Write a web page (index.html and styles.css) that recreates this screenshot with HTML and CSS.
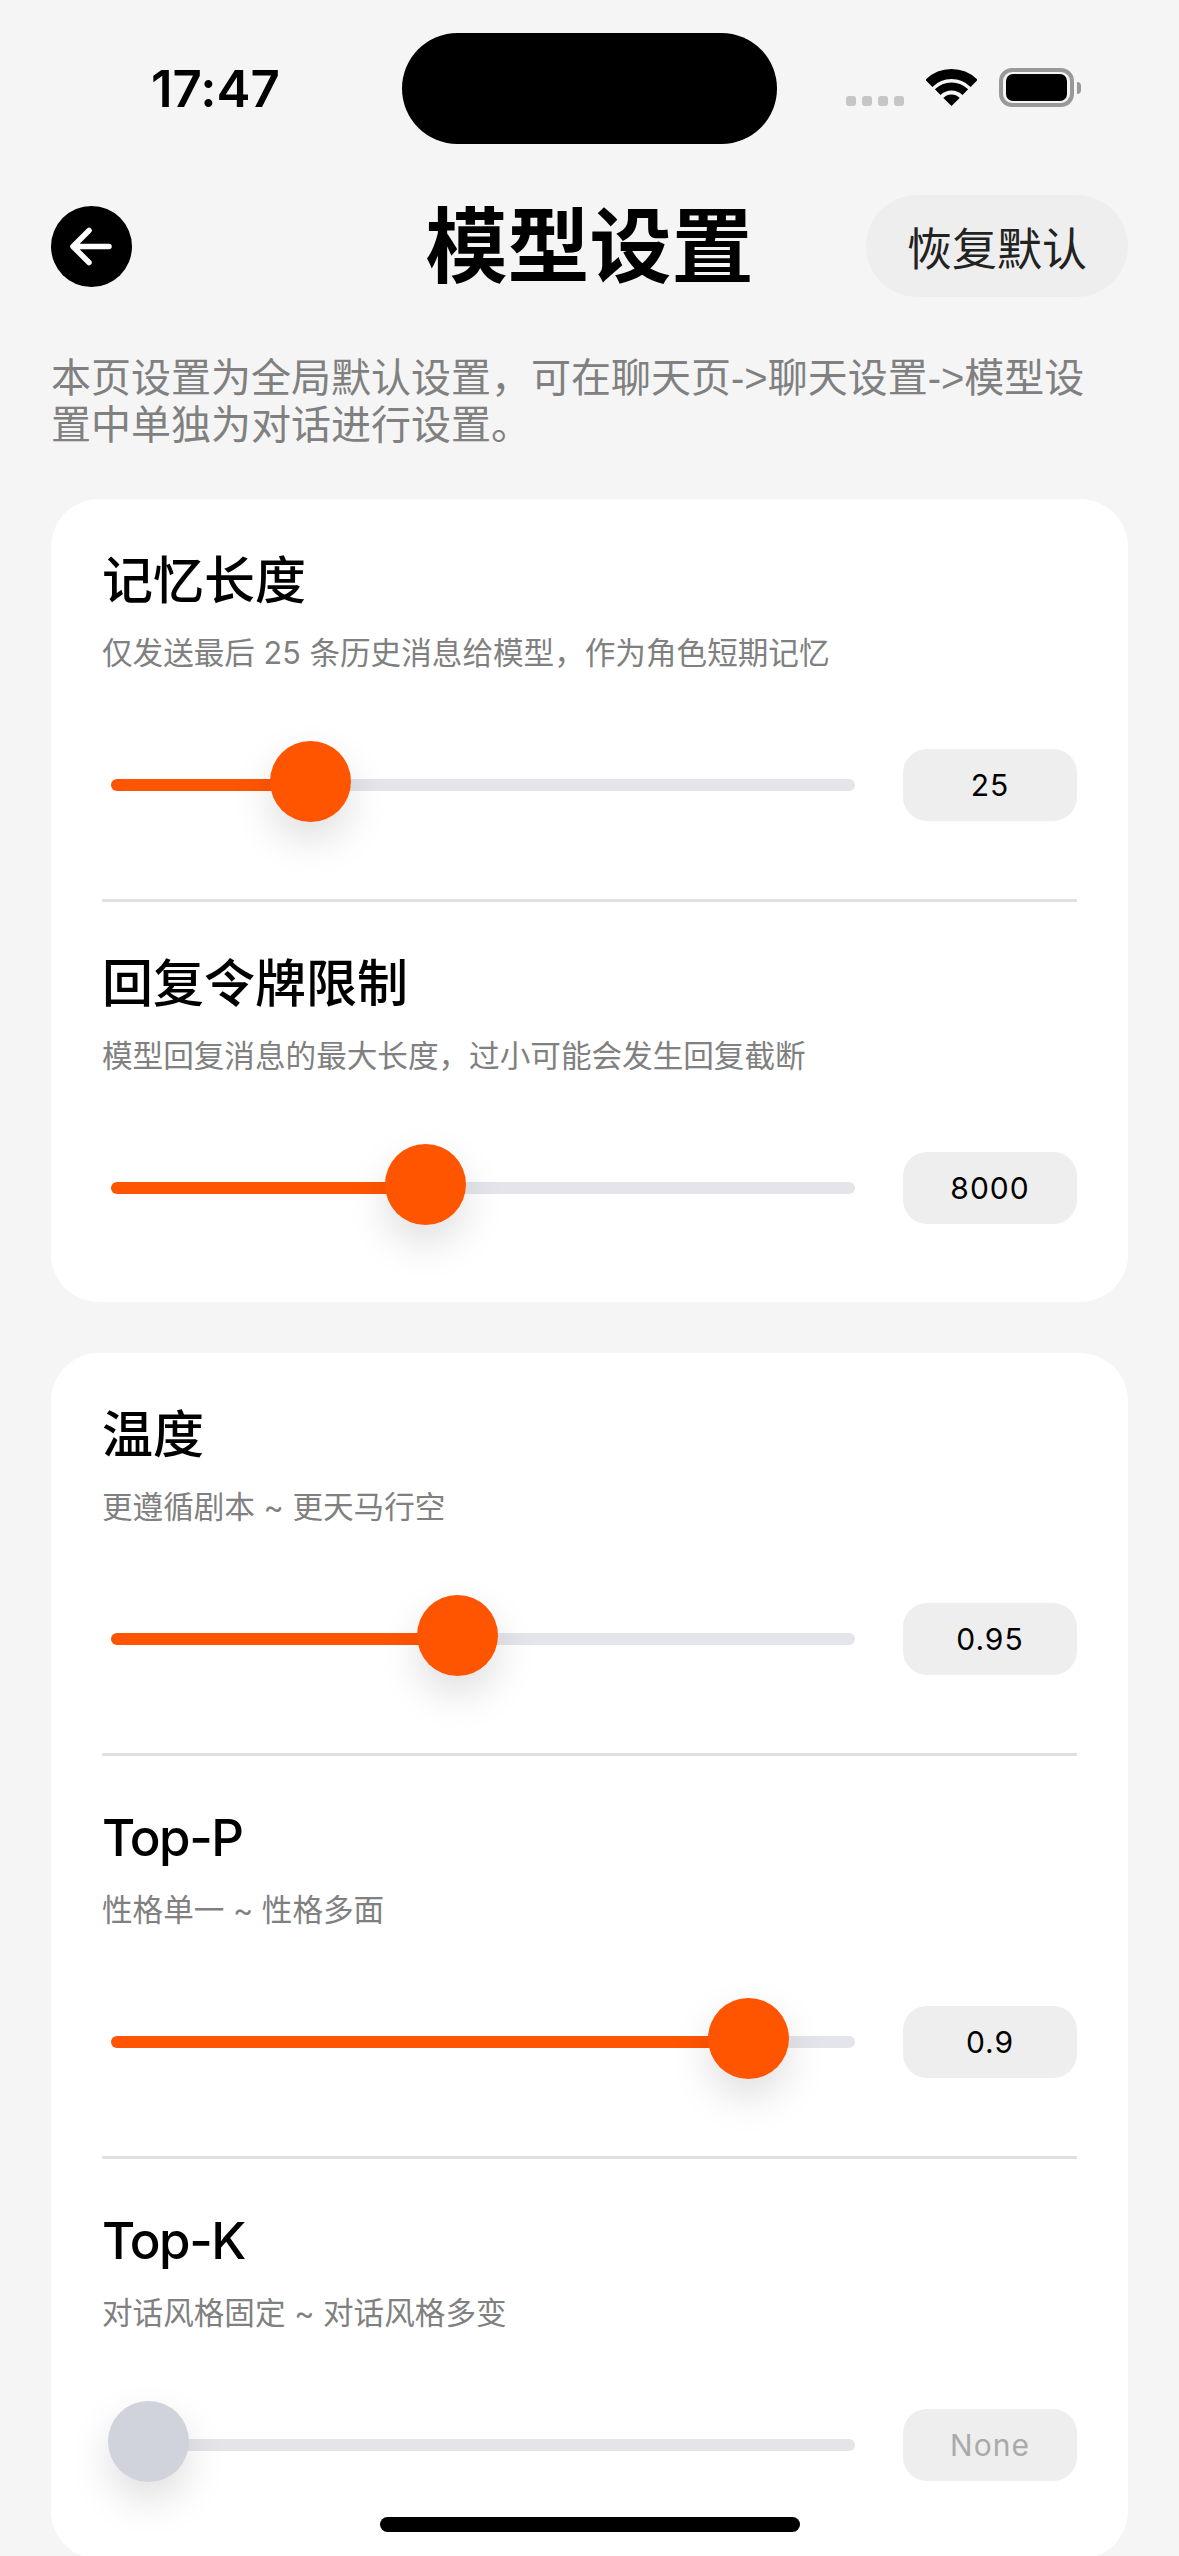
FILE: index.html
```html
<!DOCTYPE html>
<html lang="zh-CN">
  <head>
    <meta charset="UTF-8" />
    <meta name="viewport" content="width=device-width, initial-scale=1.0" />
    <title>模型设置</title>
    <link rel="stylesheet" href="styles.css">
  </head>
  <body>
    <!-- Status bar -->
    <div class="status-bar">
      <div class="status-time">17:47</div>
      <div class="island"></div>
      <div class="status-icons">
        <div class="signal"><span></span><span></span><span></span><span></span></div>
        <svg class="wifi" width="51" height="37" viewBox="0 0 51 37">
          <path d="M2.9 14.4A32 32 0 0 1 48.1 14.4" fill="none" stroke="#000" stroke-width="10" />
          <path d="M11.7 23.2A19.5 19.5 0 0 1 39.3 23.2" fill="none" stroke="#000" stroke-width="8" />
          <path d="M25.5 37L17.4 28.9A11.5 11.5 0 0 1 33.6 28.9Z" fill="#000" />
        </svg>
        <div class="battery"><div class="battery-level"></div></div>
        <div class="battery-nub"></div>
      </div>
    </div>

    <!-- Header -->
    <header class="page-header">
      <div class="header-left">
        <button class="back-btn">
          <svg width="81" height="81" viewBox="0 0 81 81">
            <path d="M22 40.5H58M38 24.5L22 40.5L38 56.5" fill="none" stroke="#fff" stroke-width="5.5" stroke-linecap="round" stroke-linejoin="round" />
          </svg>
        </button>
      </div>
      <h1>模型设置</h1>
      <div class="header-right">
        <button class="reset-btn">恢复默认</button>
      </div>
    </header>

    <p class="page-desc">本页设置为全局默认设置，可在聊天页-&gt;聊天设置-&gt;模型设置中单独为对话进行设置。</p>

    <!-- Card 1 -->
    <section class="card">
      <div class="setting">
        <h2>记忆长度</h2>
        <p class="hint">仅发送最后 25 条历史消息给模型，作为角色短期记忆</p>
        <div class="slider-row">
          <div class="track">
            <div class="fill" style="width: 26.7%"></div>
            <div class="thumb" style="left: 26.7%"></div>
          </div>
          <div class="value">25</div>
        </div>
      </div>
      <div class="setting">
        <h2>回复令牌限制</h2>
        <p class="hint">模型回复消息的最大长度，过小可能会发生回复截断</p>
        <div class="slider-row">
          <div class="track">
            <div class="fill" style="width: 42.2%"></div>
            <div class="thumb" style="left: 42.2%"></div>
          </div>
          <div class="value">8000</div>
        </div>
      </div>
    </section>

    <!-- Card 2 -->
    <section class="card">
      <div class="setting">
        <h2>温度</h2>
        <p class="hint">更遵循剧本 ~ 更天马行空</p>
        <div class="slider-row">
          <div class="track">
            <div class="fill" style="width: 46.5%"></div>
            <div class="thumb" style="left: 46.5%"></div>
          </div>
          <div class="value">0.95</div>
        </div>
      </div>
      <div class="setting">
        <h2 class="title-en">Top-P</h2>
        <p class="hint">性格单一 ~ 性格多面</p>
        <div class="slider-row">
          <div class="track">
            <div class="fill" style="width: 85.6%"></div>
            <div class="thumb" style="left: 85.6%"></div>
          </div>
          <div class="value">0.9</div>
        </div>
      </div>
      <div class="setting">
        <h2 class="title-en">Top-K</h2>
        <p class="hint">对话风格固定 ~ 对话风格多变</p>
        <div class="slider-row">
          <div class="track">
            <div class="thumb thumb-off" style="left: 5%"></div>
          </div>
          <div class="value value-off">None</div>
        </div>
      </div>
    </section>

    <div class="home-bar"></div>
  </body>
</html>
```

FILE: styles.css
```css
* {
  box-sizing: border-box;
}

html,
body {
  height: 2556px;
}

body {
  margin: 0;
  overflow: hidden;
  position: relative;
  background: #f5f5f5;
  color: #000;
  font-family: Inter, "Noto Sans CJK SC", sans-serif;
  font-variant-ligatures: none;
  font-feature-settings: "calt" 0;
}

/* Status bar */
.status-bar {
  display: flex;
  height: 195px;
  padding-top: 33px;
}

.status-time {
  width: 402px;
  padding-left: 151px;
  padding-top: 27px;
  font-size: 51px;
  line-height: 58px;
  font-weight: 600;
}

.island {
  width: 375px;
  height: 111px;
  background: #000;
  border-radius: 56px;
}

.status-icons {
  display: flex;
  align-items: flex-start;
  padding-left: 69px;
}

.signal {
  display: flex;
  gap: 6px;
  margin-top: 63px;
}

.signal span {
  width: 10px;
  height: 10px;
  border-radius: 3px;
  background: #c6c6c6;
}

.wifi {
  margin: 36px 0 0 22px;
}

.battery {
  width: 75px;
  height: 39px;
  margin: 35px 0 0 22px;
  padding: 2px 3px;
  border: 4px solid #999;
  border-radius: 13px;
}

.battery-level {
  height: 100%;
  background: #000;
  border-radius: 7px;
}

.battery-nub {
  width: 4px;
  height: 12px;
  margin: 49px 0 0 3px;
  background: #999;
  border-radius: 0 6px 6px 0;
}

/* Header */
.page-header {
  display: grid;
  grid-template-columns: 1fr auto 1fr;
  align-items: center;
  height: 102px;
  padding: 0 51px;
}

.page-header h1 {
  margin: 0;
  padding-top: 2px;
  font-size: 82px;
  line-height: 100px;
  font-weight: 700;
}

.header-right {
  display: flex;
  justify-content: flex-end;
}

.back-btn {
  display: block;
  width: 81px;
  height: 81px;
  padding: 0;
  border: none;
  border-radius: 50%;
  background: #000;
}

.back-btn svg {
  display: block;
}

.reset-btn {
  width: 262px;
  height: 102px;
  padding: 0;
  border: none;
  border-radius: 51px;
  background: #eee;
  color: #222;
  font-family: inherit;
  font-size: 45px;
}

.page-desc {
  width: 1050px;
  height: 94px;
  margin: 58px 0 50px 51px;
  color: #808080;
  font-family: "Liberation Sans", "Noto Sans CJK SC", sans-serif;
  font-size: 40px;
  line-height: 47px;
}

/* Cards */
.card {
  margin: 0 51px 51px;
  padding: 0 51px;
  background: #fff;
  border-radius: 48px;
}

.setting {
  padding: 50px 0 78px;
  border-bottom: 3px solid #e0e0e0;
}

.setting:last-child {
  border-bottom: none;
}

.setting h2 {
  margin: 0;
  font-size: 51px;
  line-height: 64px;
  font-weight: 500;
}

.setting .title-en {
  letter-spacing: -1.5px;
}

.hint {
  margin: 20px 0 0;
  color: #808080;
  font-size: 30.6px;
  line-height: 40px;
}

/* Slider */
.slider-row {
  display: flex;
  align-items: center;
  height: 72px;
  margin-top: 76px;
  padding-left: 9px;
}

.track {
  flex: 1;
  position: relative;
  height: 12px;
  margin-right: 48px;
  background: #e4e5ea;
  border-radius: 6px;
}

.fill {
  height: 100%;
  background: #ff5500;
  border-radius: 6px 0 0 6px;
}

.thumb {
  position: absolute;
  top: -38px;
  width: 81px;
  height: 81px;
  margin-left: -40px;
  background: #ff5500;
  border-radius: 50%;
  box-shadow: 0 18px 40px rgba(0, 0, 0, 0.13);
}

.thumb-off {
  background: #d0d3dc;
}

.value {
  width: 174px;
  height: 72px;
  background: #eee;
  border-radius: 24px;
  font-size: 30px;
  line-height: 72px;
  letter-spacing: 1px;
  text-align: center;
}

.value-off {
  color: #aaa;
}

.home-bar {
  position: absolute;
  left: 380px;
  top: 2517px;
  width: 420px;
  height: 15px;
  background: #000;
  border-radius: 8px;
}
```
